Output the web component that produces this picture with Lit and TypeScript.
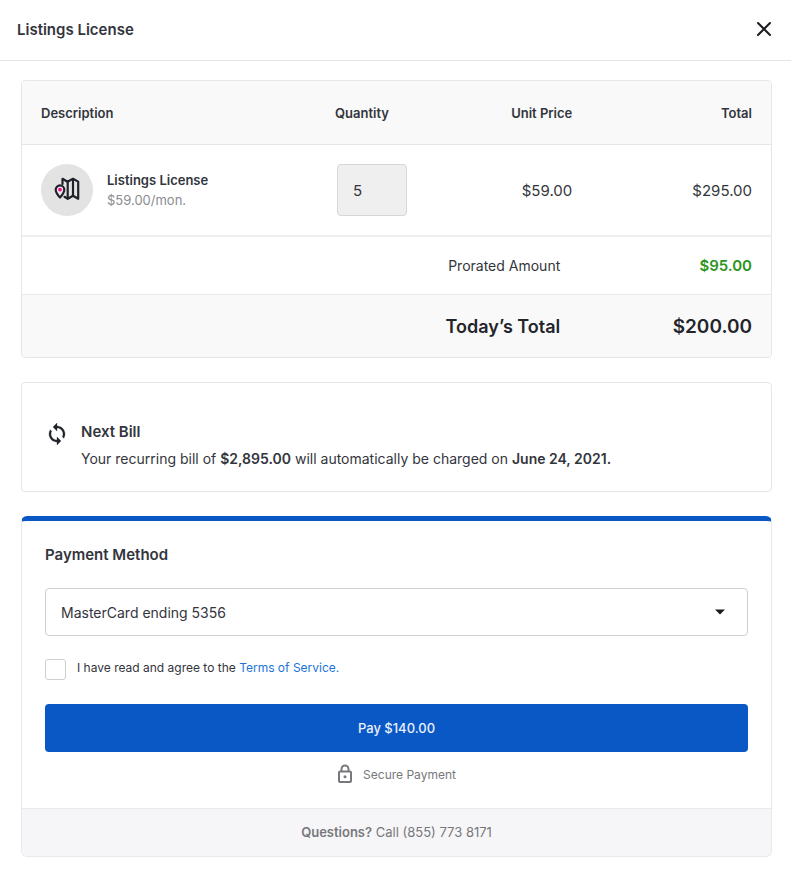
import { LitElement, html, css } from "lit";
import { customElement, property, state } from "lit/decorators.js";

const money = (n: number) =>
  "$" + n.toLocaleString("en-US", { minimumFractionDigits: 2, maximumFractionDigits: 2 });

const base = css`
  :host {
    display: block;
    box-sizing: border-box;
  }
  *,
  *::before,
  *::after {
    box-sizing: border-box;
  }
  h1,
  h2,
  p {
    margin: 0;
  }
  button,
  input,
  select {
    font: inherit;
    color: inherit;
    margin: 0;
  }
`;

@customElement("order-summary")
export class OrderSummary extends LitElement {
  static styles = [
    base,
    css`
      .frame {
        border: 1px solid #e6e6e6;
        border-radius: 4px;
        overflow: hidden;
      }
      table {
        width: 100%;
        border-collapse: separate;
        border-spacing: 0;
        table-layout: fixed;
      }
      th,
      td {
        padding: 0 19px;
        text-align: left;
        font-weight: 400;
      }
      .c-desc {
        width: 294px;
      }
      .c-qty {
        width: 16%;
      }
      .c-total {
        width: 24%;
      }
      thead th {
        height: 64px;
        background: #f9f9f9;
        border-bottom: 1px solid #e6e6e6;
        font-size: 13px;
        font-weight: 600;
      }
      .num {
        text-align: right;
      }
      tbody td {
        height: 92px;
        border-bottom: 2px solid #eeeeee;
        font-size: 15px;
      }
      .product {
        display: flex;
        align-items: center;
        gap: 14px;
      }
      .badge {
        flex: none;
        display: grid;
        place-items: center;
        width: 52px;
        height: 52px;
        border-radius: 50%;
        background: #e3e3e3;
      }
      .badge svg {
        display: block;
        margin-bottom: 2px;
      }
      .name {
        font-size: 13px;
        line-height: 20px;
        font-weight: 600;
      }
      .rate {
        font-size: 13px;
        line-height: 20px;
        color: #8b8c90;
      }
      .qty {
        display: block;
        width: 70px;
        height: 52px;
        margin-left: 2px;
        padding: 0 15px;
        border: 1px solid #d6d6d6;
        border-radius: 4px;
        background: #efefef;
        outline: none;
        appearance: textfield;
      }
      tfoot th {
        text-align: right;
        padding-right: 31px;
      }
      .prorated > * {
        height: 58px;
        border-bottom: 1px solid #e9e9e9;
        font-size: 15px;
      }
      .prorated th {
        font-size: 14px;
      }
      .prorated td {
        color: #2c9420;
        font-weight: 600;
      }
      .today > * {
        height: 62px;
        background: #f9f9f9;
        font-size: 19px;
        font-weight: 600;
        color: #23252b;
      }
      .today th {
        font-size: 18px;
      }
    `,
  ];

  @property({ type: Number }) quantity = 5;
  @property({ type: Number }) price = 59;

  render() {
    return html`
      <div class="frame">
        <table>
          <colgroup>
            <col class="c-desc" />
            <col class="c-qty" />
            <col />
            <col class="c-total" />
          </colgroup>
          <thead>
            <tr>
              <th scope="col">Description</th>
              <th scope="col" id="qty-head">Quantity</th>
              <th scope="col" class="num">Unit Price</th>
              <th scope="col" class="num">Total</th>
            </tr>
          </thead>
          <tbody>
            <tr>
              <td>
                <div class="product">
                  <span class="badge">
                    <svg width="26" height="24" viewBox="0 0 26 24" fill="none" aria-hidden="true">
                      <g stroke="#1f2229" stroke-width="2.2" stroke-linejoin="round" stroke-linecap="round">
                        <path d="M8.500 7V1.800L13.500 4.800 19 1.800 24.200 4.600V21.800L19 18.800 13.800 21.800 10.500 19.800" />
                        <path d="M13.700 5v16.300M19 2.200V18.600" />
                        <path
                          fill="#f3e3ec"
                          d="M6 20.500C3.600 17.800 1.700 15.400 1.700 12.700a4.300 4.300 0 0 1 8.600 0C10.300 15.400 8.400 17.800 6 20.500z"
                        />
                      </g>
                      <circle cx="6" cy="12.600" r="1.900" fill="#f0148c" />
                    </svg>
                  </span>
                  <div>
                    <div class="name">Listings License</div>
                    <div class="rate">${money(this.price)}/mon.</div>
                  </div>
                </div>
              </td>
              <td>
                <input class="qty" type="text" inputmode="numeric" readonly aria-labelledby="qty-head" .value=${String(this.quantity)} />
              </td>
              <td class="num">${money(this.price)}</td>
              <td class="num">${money(this.price * this.quantity)}</td>
            </tr>
          </tbody>
          <tfoot>
            <tr class="prorated">
              <th scope="row" colspan="3">Prorated Amount</th>
              <td class="num">${money(95)}</td>
            </tr>
            <tr class="today">
              <th scope="row" colspan="3">Today’s Total</th>
              <td class="num">${money(200)}</td>
            </tr>
          </tfoot>
        </table>
      </div>
    `;
  }
}

@customElement("next-bill")
export class NextBill extends LitElement {
  static styles = [
    base,
    css`
      .card {
        display: flex;
        gap: 14px;
        padding: 35px 25px 19px;
        border: 1px solid #e6e6e6;
        border-radius: 4px;
      }
      svg {
        flex: none;
        display: block;
        margin-top: 4px;
      }
      h2 {
        font-size: 15px;
        line-height: 28px;
        font-weight: 600;
      }
      p {
        font-size: 14px;
        line-height: 26px;
      }
      b {
        font-weight: 600;
      }
    `,
  ];

  render() {
    return html`
      <section class="card">
        <svg width="20" height="24" viewBox="2 0 20 24" aria-hidden="true">
          <path
            fill="#1f2229"
            stroke="#1f2229"
            stroke-width=".3"
            d="M12 4V1L8 5l4 4V6c3.310 0 6 2.690 6 6 0 1.010-.25 1.970-.7 2.800l1.460 1.460C19.540 15.030 20 13.570 20 12c0-4.420-3.580-8-8-8zm0 14c-3.310 0-6-2.690-6-6 0-1.010.25-1.970.7-2.800L5.240 7.740C4.460 8.970 4 10.430 4 12c0 4.420 3.580 8 8 8v3l4-4-4-4v3z"
          />
        </svg>
        <div>
          <h2>Next Bill</h2>
          <p>Your recurring bill of <b>${money(2895)}</b> will automatically be charged on <b>June 24, 2021.</b></p>
        </div>
      </section>
    `;
  }
}

@customElement("payment-form")
export class PaymentForm extends LitElement {
  static styles = [
    base,
    css`
      .card {
        border: 1px solid #e9e9e9;
        border-top: 5px solid #0a57c6;
        border-radius: 6px;
        overflow: hidden;
      }
      form {
        display: flex;
        flex-direction: column;
        padding: 21px 23px 24px;
      }
      h2 {
        font-size: 15px;
        line-height: 26px;
        font-weight: 600;
      }
      .picker {
        display: grid;
        align-items: center;
        margin-top: 20px;
      }
      .picker > * {
        grid-area: 1 / 1;
      }
      select {
        width: 100%;
        height: 48px;
        padding: 0 40px 0 15px;
        border: 1px solid #cfcfcf;
        border-radius: 4px;
        background: #fff;
        appearance: none;
        font-size: 14px;
      }
      .picker svg {
        justify-self: end;
        margin-right: 23px;
        pointer-events: none;
      }
      .agree {
        display: flex;
        align-items: flex-start;
        gap: 11px;
        margin-top: 23px;
        font-size: 12px;
        line-height: 18px;
      }
      .agree input {
        appearance: none;
        width: 21px;
        height: 21px;
        border: 1px solid #cfcfcf;
        border-radius: 3px;
        background: #fff;
      }
      .agree input:checked {
        background: #0a57c6;
      }
      a {
        color: #1b74d8;
        text-decoration: none;
      }
      .pay {
        height: 48px;
        margin-top: 24px;
        border: 0;
        border-radius: 4px;
        background: #0a57c6;
        color: #e9f1fc;
        font-size: 13px;
        font-weight: 500;
        cursor: pointer;
      }
      .secure {
        display: flex;
        justify-content: center;
        align-items: center;
        gap: 10px;
        height: 20px;
        margin-top: 12px;
        font-size: 12px;
        color: #77787c;
      }
      footer {
        height: 48px;
        border-top: 1px solid #e9e9e9;
        background: #f6f6f8;
        text-align: center;
        font-size: 13px;
        line-height: 47px;
        color: #77787c;
      }
      footer b {
        font-weight: 600;
      }
    `,
  ];

  @state() private agreed = false;

  private toggle(e: Event) {
    this.agreed = (e.target as HTMLInputElement).checked;
  }

  render() {
    return html`
      <section class="card">
        <form @submit=${(e: Event) => e.preventDefault()}>
          <h2 id="method">Payment Method</h2>
          <div class="picker">
            <select aria-labelledby="method">
              <option>MasterCard ending 5356</option>
            </select>
            <svg width="10" height="6" viewBox="0 0 10 6" aria-hidden="true">
              <path d="M0 .5h10L5 5.500z" fill="#1b1c20" />
            </svg>
          </div>
          <div class="agree">
            <input id="agree" type="checkbox" .checked=${this.agreed} @change=${this.toggle} />
            <label for="agree">I have read and agree to the <a href="#terms">Terms of Service.</a></label>
          </div>
          <button class="pay" type="submit">Pay ${money(140)}</button>
          <div class="secure">
            <svg width="16" height="20" viewBox="0 0 16 20" fill="none" stroke="#77787c" stroke-width="2" aria-hidden="true">
              <rect x="2" y="7.500" width="12" height="10.500" rx="1" />
              <path d="M4.500 7.500V5a3.500 3.500 0 0 1 7 0v2.500" />
              <circle cx="8" cy="12.800" r="1.500" fill="#77787c" stroke="none" />
            </svg>
            <span>Secure Payment</span>
          </div>
        </form>
        <footer><b>Questions?</b> Call (855) 773 8171</footer>
      </section>
    `;
  }
}

@customElement("app-root")
export class AppRoot extends LitElement {
  static styles = [
    base,
    css`
      :host {
        min-height: 100vh;
        background: #fff;
        color: #33353c;
        font-family: Inter, "Liberation Sans", sans-serif;
      }
      header {
        display: flex;
        align-items: center;
        justify-content: space-between;
        height: 61px;
        padding: 0 19px 2px 17px;
        border-bottom: 1px solid #e4e4e4;
      }
      h1 {
        font-size: 15px;
        font-weight: 600;
      }
      .close {
        display: block;
        padding: 0;
        border: 0;
        background: none;
        cursor: pointer;
      }
      .close svg {
        display: block;
      }
      main {
        display: flex;
        flex-direction: column;
        gap: 24px;
        padding: 19px 19px 22px 21px;
      }
    `,
  ];

  render() {
    return html`
      <header>
        <h1>Listings License</h1>
        <button class="close" type="button" aria-label="Close">
          <svg width="16" height="16" viewBox="0 0 16 16" aria-hidden="true">
            <path d="M2 2l12 12M14 2L2 14" stroke="#1b1c20" stroke-width="2" stroke-linecap="round" />
          </svg>
        </button>
      </header>
      <main>
        <order-summary></order-summary>
        <next-bill></next-bill>
        <payment-form></payment-form>
      </main>
    `;
  }
}
